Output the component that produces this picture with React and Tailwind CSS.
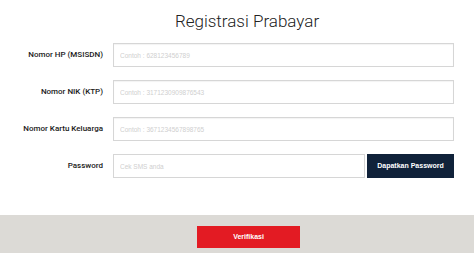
export default function App() {
  const rows = [
    { label: "Nomor HP (MSISDN)", ph: "Contoh : 628123456789" },
    { label: "Nomor NIK (KTP)", ph: "Contoh : 3171230909876543" },
    { label: "Nomor Kartu Keluarga", ph: "Contoh : 3671234567898765" },
  ];
  const labelCls = "flex items-center justify-end text-[8px] font-medium text-[#1a1a1a]";
  return (
    <div className="w-[474px] h-[253px] flex flex-col bg-white overflow-hidden" style={{ fontFamily: '"Liberation Sans", Arial, sans-serif' }}>
      <div className="flex-1 flex flex-col">
        <h1 className="pt-[10px] pl-[20px] text-center text-[17px] leading-[22px] font-light text-[#222]" style={{ fontFamily: 'Roboto, "Liberation Sans", sans-serif' }}>
          Registrasi Prabayar
        </h1>
        <div className="mt-[11px] pr-[20px] grid grid-cols-[103px_1fr] gap-x-[10px] gap-y-[13px]">
          {rows.map((r) => (
            <div key={r.label} className="contents">
              <div className={labelCls} style={{ fontFamily: 'Roboto, sans-serif' }}>{r.label}</div>
              <input readOnly placeholder={r.ph} className="h-[24px] border border-[#d6d6d6] shadow-[inset_0_1px_1px_rgba(0,0,0,0.05)] px-[6px] text-[6.5px] placeholder:text-[#cfcfcf] outline-none" />
            </div>
          ))}
          <div className={labelCls} style={{ fontFamily: 'Roboto, sans-serif' }}>Password</div>
          <div className="flex h-[24px]">
            <input readOnly placeholder="Cek SMS anda" className="flex-1 min-w-0 h-[24px] border border-[#d6d6d6] px-[6px] text-[6.5px] placeholder:text-[#cfcfcf] outline-none" />
            <button className="ml-[2px] w-[87px] h-[24px] bg-[#10223a] text-white text-[7px] font-bold">Dapatkan Password</button>
          </div>
        </div>
      </div>
      <div className="h-[38px] bg-[#dcdad6] flex justify-center items-start pt-[11px] pl-[23px]">
        <button className="w-[103px] h-[22px] bg-[#e31b23] text-white text-[7px] font-bold">Verifikasi</button>
      </div>
    </div>
  );
}
